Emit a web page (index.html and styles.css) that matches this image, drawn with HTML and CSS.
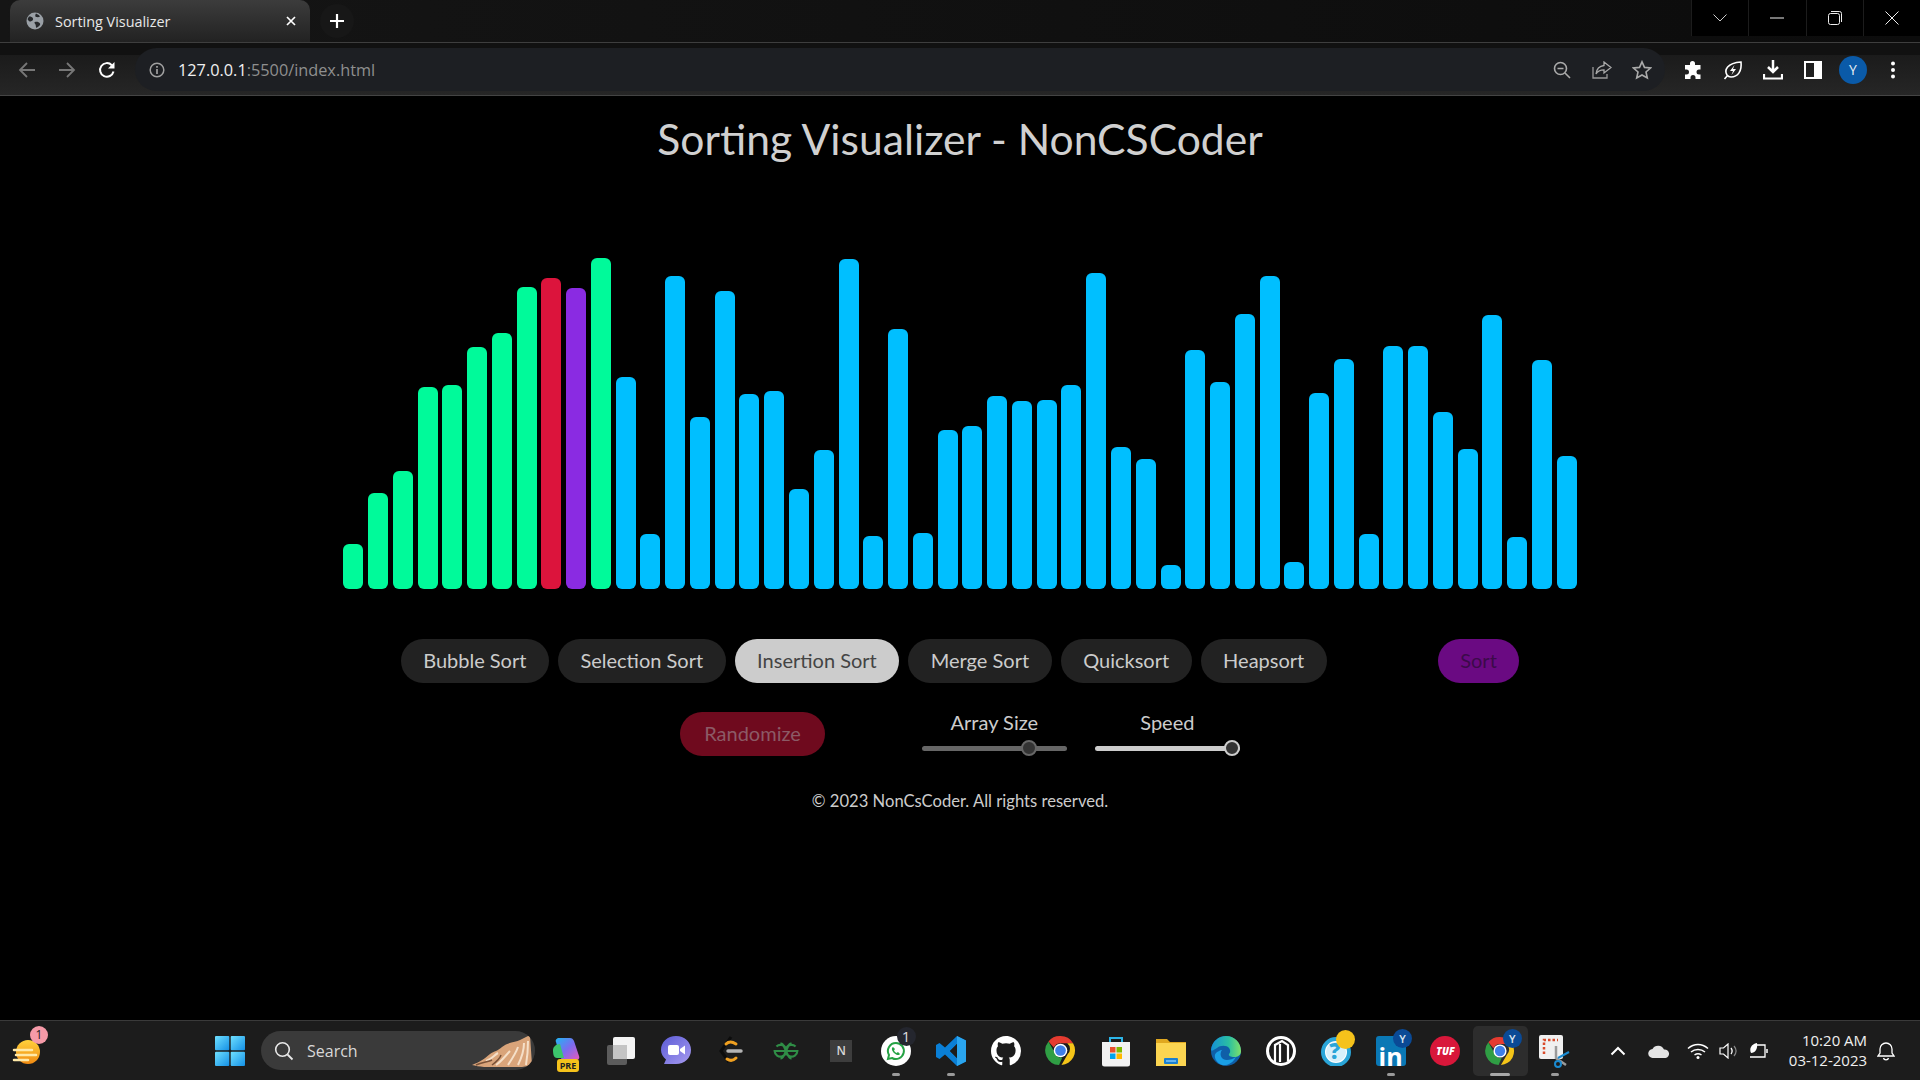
FILE: index.html
```html
<!DOCTYPE html>
<html lang="en">
<head>
<meta charset="utf-8">
<title>Sorting Visualizer</title>
<link rel="stylesheet" href="styles.css">
</head>
<body>
<svg class="defs" width="0" height="0" aria-hidden="true">
  <defs>
    <symbol id="chrome-logo" viewBox="0 0 32 32">
      <path d="M16 1a15 15 0 0 1 13 7.5H16a7.5 7.5 0 0 0-6.9 4.5L3.6 6.6A15 15 0 0 1 16 1z" fill="#e53b30"/>
      <path d="M29 8.500A15 15 0 0 1 17 31l6.500-11.300A7.500 7.500 0 0 0 23 8.500z" fill="#f5c518"/>
      <path d="M3.600 6.600L9.900 18a7.500 7.500 0 0 0 8 5.300L14.500 31A15 15 0 0 1 3.600 6.600z" fill="#2f9e44"/>
      <circle cx="16" cy="16" r="7" fill="#fff"/>
      <circle cx="16" cy="16" r="5.500" fill="#3f7fe8"/>
    </symbol>
  </defs>
</svg>

<header class="browser">
  <div class="tabstrip">
    <div class="tab">
      <svg class="favicon" viewBox="0 0 18 18"><circle cx="9" cy="9" r="8.500" fill="#9aa0a6"/><path d="M3 4.500c2 0 3.500 .5 4 2s-1 2.500-2.500 3S2 8 1.500 7zM10 1.500c2 1 3 1.500 4 3-1.500 1-3 .5-4 .5s-1-2.500 0-3.500zM9 10c2-.5 4 0 5 1.500S12 15 10.500 16c-1-1.500-.5-2.500-1-3.500S7.500 10.500 9 10z" fill="#26282b"/></svg>
      <span class="tab-title">Sorting Visualizer</span>
      <svg class="tab-close" viewBox="0 0 10 10"><path d="M1 1l8 8M9 1l-8 8" stroke="#fff" stroke-width="1.700" fill="none"/></svg>
    </div>
    <div class="newtab"><svg viewBox="0 0 16 16" width="16" height="16"><path d="M8 1v14M1 8h14" stroke="#fff" stroke-width="2.200" fill="none"/></svg></div>
    <div class="winctrls">
      <div class="winbtn"><svg viewBox="0 0 14 8" width="14" height="8"><path d="M.5.5L7 7 13.500.5" stroke="#ccc" fill="none"/></svg></div>
      <div class="winbtn"><svg viewBox="0 0 14 2" width="14" height="2"><path d="M0 1h14" stroke="#eee" fill="none"/></svg></div>
      <div class="winbtn"><svg viewBox="0 0 14 14" width="14" height="14"><rect x=".5" y="2.500" width="11" height="11" rx="2" stroke="#eee" fill="none"/><path d="M3 .5h8.500a2 2 0 0 1 2 2V11" stroke="#eee" fill="none"/></svg></div>
      <div class="winbtn"><svg viewBox="0 0 14 14" width="14" height="14"><path d="M.5.5l13 13M13.500.5l-13 13" stroke="#eee" fill="none"/></svg></div>
    </div>
  </div>
  <div class="toolbar">
    <div class="tbtn"><svg viewBox="0 0 18 18" width="18" height="18"><path d="M17 9H2M9 2L2 9l7 7" stroke="#777" stroke-width="1.800" fill="none"/></svg></div>
    <div class="tbtn"><svg viewBox="0 0 18 18" width="18" height="18"><path d="M1 9h15M9 2l7 7-7 7" stroke="#777" stroke-width="1.800" fill="none"/></svg></div>
    <div class="tbtn"><svg viewBox="0 0 18 18" width="18" height="18"><path d="M15.500 10.500A6.800 6.800 0 1 1 13.800 4.200" stroke="#fff" stroke-width="2" fill="none"/><path d="M16.500 1v6.500H10z" fill="#fff"/></svg></div>
    <div class="omnibox">
      <svg class="info" viewBox="0 0 16 16" width="16" height="16"><circle cx="8" cy="8" r="6.800" stroke="#a0a0a0" stroke-width="1.500" fill="none"/><path d="M8 7v5M8 4v1.800" stroke="#a0a0a0" stroke-width="1.700"/></svg>
      <span class="url"><span class="url-host">127.0.0.1</span>:5500/index.html</span>
      <div class="omni-right">
        <div class="tbtn"><svg viewBox="0 0 18 18" width="18" height="18"><circle cx="7.500" cy="7.500" r="6" stroke="#aaa" stroke-width="1.600" fill="none"/><path d="M4.500 7.500h6M12 12l5 5" stroke="#aaa" stroke-width="1.600"/></svg></div>
        <div class="tbtn"><svg viewBox="0 0 20 18" width="20" height="18"><path d="M1 6v11h14v-4" stroke="#999" stroke-width="1.300" fill="none"/><path d="M12 1l7 5.500-7 5.500V8.800C8 8.800 5.500 10 4 13c.5-4.500 3.500-8 8-8.500z" stroke="#aaa" stroke-width="1.300" fill="none"/></svg></div>
        <div class="tbtn"><svg viewBox="0 0 20 20" width="20" height="20"><path d="M10 1.800l2.500 5.600 6 .6-4.500 4 1.300 6L10 15l-5.300 3 1.300-6-4.500-4 6-.6z" stroke="#aaa" stroke-width="1.600" fill="none"/></svg></div>
      </div>
    </div>
    <div class="toolbar-right">
      <div class="tbtn"><svg viewBox="0 0 20 20" width="20" height="20"><path d="M7 3.500a2.500 2.500 0 0 1 5 0V5h5.500v4.500H16a2.500 2.500 0 0 0 0 5h1.500V19h-5v-1.500a2.500 2.500 0 0 0-5 0V19H2v-4.500h1.500a2.500 2.500 0 0 0 0-5H2V5h5z" fill="#fff"/></svg></div>
      <div class="tbtn"><svg viewBox="0 0 20 20" width="20" height="20"><path d="M4 15C1 10 4 3 18 2c1 9-3 15-10 15-1.500 0-3-.7-4-2zM1.500 19L5 15" stroke="#fff" stroke-width="1.600" fill="none"/><path d="M11.500 5L7 11h3l-1.500 4L13 9h-3z" fill="#fff"/></svg></div>
      <div class="tbtn"><svg viewBox="0 0 20 20" width="20" height="20"><path d="M10 0v11M5 7l5 5 5-5" stroke="#fff" stroke-width="2.500" fill="none"/><path d="M1 14v4.500h18V14" stroke="#fff" stroke-width="2.200" fill="none"/></svg></div>
      <div class="tbtn"><svg viewBox="0 0 18 18" width="18" height="18"><rect x="1" y="1" width="16" height="16" fill="none" stroke="#fff" stroke-width="2"/><rect x="10" y="1" width="7" height="16" fill="#fff"/></svg></div>
      <div class="tbtn"><span class="avatar">Y</span></div>
      <div class="tbtn"><svg viewBox="0 0 6 18" width="6" height="18"><circle cx="3" cy="2.500" r="2" fill="#fff"/><circle cx="3" cy="9" r="2" fill="#fff"/><circle cx="3" cy="15.500" r="2" fill="#fff"/></svg></div>
    </div>
  </div>
</header>

<main class="page">
  <h1 class="title">Sorting Visualizer - NonCSCoder</h1>
  <div class="bars">
    <div class="bar sorted" style="height:45px"></div>
    <div class="bar sorted" style="height:96px"></div>
    <div class="bar sorted" style="height:118px"></div>
    <div class="bar sorted" style="height:202px"></div>
    <div class="bar sorted" style="height:204px"></div>
    <div class="bar sorted" style="height:242px"></div>
    <div class="bar sorted" style="height:256px"></div>
    <div class="bar sorted" style="height:302px"></div>
    <div class="bar current" style="height:311px"></div>
    <div class="bar compare" style="height:301px"></div>
    <div class="bar sorted" style="height:331px"></div>
    <div class="bar" style="height:212px"></div>
    <div class="bar" style="height:55px"></div>
    <div class="bar" style="height:313px"></div>
    <div class="bar" style="height:172px"></div>
    <div class="bar" style="height:298px"></div>
    <div class="bar" style="height:195px"></div>
    <div class="bar" style="height:198px"></div>
    <div class="bar" style="height:100px"></div>
    <div class="bar" style="height:139px"></div>
    <div class="bar" style="height:330px"></div>
    <div class="bar" style="height:53px"></div>
    <div class="bar" style="height:260px"></div>
    <div class="bar" style="height:56px"></div>
    <div class="bar" style="height:159px"></div>
    <div class="bar" style="height:163px"></div>
    <div class="bar" style="height:193px"></div>
    <div class="bar" style="height:188px"></div>
    <div class="bar" style="height:189px"></div>
    <div class="bar" style="height:204px"></div>
    <div class="bar" style="height:316px"></div>
    <div class="bar" style="height:142px"></div>
    <div class="bar" style="height:130px"></div>
    <div class="bar" style="height:24px"></div>
    <div class="bar" style="height:239px"></div>
    <div class="bar" style="height:207px"></div>
    <div class="bar" style="height:275px"></div>
    <div class="bar" style="height:313px"></div>
    <div class="bar" style="height:27px"></div>
    <div class="bar" style="height:196px"></div>
    <div class="bar" style="height:230px"></div>
    <div class="bar" style="height:55px"></div>
    <div class="bar" style="height:243px"></div>
    <div class="bar" style="height:243px"></div>
    <div class="bar" style="height:177px"></div>
    <div class="bar" style="height:140px"></div>
    <div class="bar" style="height:274px"></div>
    <div class="bar" style="height:52px"></div>
    <div class="bar" style="height:229px"></div>
    <div class="bar" style="height:133px"></div>
  </div>
  <div class="algos">
    <button class="pill">Bubble Sort</button>
    <button class="pill">Selection Sort</button>
    <button class="pill active">Insertion Sort</button>
    <button class="pill">Merge Sort</button>
    <button class="pill">Quicksort</button>
    <button class="pill">Heapsort</button>
    <button class="pill sort">Sort</button>
  </div>
  <div class="controls">
    <button class="pill randomize">Randomize</button>
    <div class="sliders">
      <label class="slider-group"><span class="slider-label">Array Size</span><input class="range range-dim" type="range" min="0" max="100" value="77"></label>
      <label class="slider-group"><span class="slider-label">Speed</span><input class="range" type="range" min="0" max="100" value="100"></label>
    </div>
  </div>
  <p class="copyright">© 2023 NonCsCoder. All rights reserved.</p>
</main>

<footer class="taskbar">
  <div class="tb-weather">
    <svg viewBox="0 0 32 32" width="32" height="32"><defs><linearGradient id="sun" x1="0" y1="0" x2="0" y2="1"><stop offset="0" stop-color="#ffd23c"/><stop offset="1" stop-color="#f08a12"/></linearGradient></defs><circle cx="17" cy="17" r="12" fill="url(#sun)"/><path d="M3 15h18M5 20h20M3 25h14" stroke="#ffe9a8" stroke-width="2.500" stroke-linecap="round"/></svg>
    <span class="weather-badge">1</span>
  </div>
  <div class="tb-start"><svg viewBox="0 0 30 30" width="30" height="30"><defs><linearGradient id="win" x1="0" y1="0" x2="1" y2="1"><stop offset="0" stop-color="#6fe0ff"/><stop offset="1" stop-color="#1490e6"/></linearGradient></defs><rect x="0" y="0" width="14.300" height="14.300" rx="1" fill="url(#win)"/><rect x="15.700" y="0" width="14.300" height="14.300" rx="1" fill="url(#win)"/><rect x="0" y="15.700" width="14.300" height="14.300" rx="1" fill="url(#win)"/><rect x="15.700" y="15.700" width="14.300" height="14.300" rx="1" fill="url(#win)"/></svg></div>
  <div class="tb-search">
    <svg viewBox="0 0 20 20" width="20" height="20"><circle cx="8.500" cy="8.500" r="6.800" stroke="#e8e8e8" stroke-width="1.600" fill="none"/><path d="M13.500 13.500l5 5" stroke="#e8e8e8" stroke-width="1.800"/></svg>
    <span class="search-text">Search</span>
    <svg class="search-art" viewBox="0 0 60 32" width="60" height="32"><path d="M0 30C8 27 12 24 18 19c4-3 8-3 12-7 6-5 14-5 18-7l10-5 2 30c-12 4-44 4-60 0z" fill="#d9a47a"/><path d="M14 26c6-2 8-6 12-8M24 30c6-4 10-10 14-14M36 30c4-6 8-12 10-18M46 30c3-6 6-14 6-22M54 30c1-6 2-14 2-24" stroke="#f5dfc8" stroke-width="2" fill="none"/><path d="M4 30c6-3 12-3 16-5M20 30c4-3 8-6 9-10" stroke="#7a5238" stroke-width="1.500" fill="none"/></svg>
  </div>
  <div class="tb-apps">
    <div class="app"><svg viewBox="0 0 30 30" width="30" height="30"><defs><linearGradient id="cop" x1="0" y1="0" x2="1" y2="1"><stop offset="0" stop-color="#1fb6f2"/><stop offset=".5" stop-color="#7b6cf0"/><stop offset="1" stop-color="#e858b8"/></linearGradient></defs><path d="M8 2h11c2 0 3 1 4 3l5 15c1 3-1 4-3 4H14c-3 0-4-1-5-4L5 6C4 4 6 2 8 2z" fill="url(#cop)"/><path d="M2 14c0-3 3-6 7-6l4 14H6c-3 0-4-3-4-8z" fill="#3cc46c"/></svg><span class="pre-tag">PRE</span></div>
    <div class="app"><svg viewBox="0 0 30 30" width="30" height="30"><rect x="1" y="9" width="20" height="20" rx="2" fill="#5c5c5c"/><rect x="7" y="1" width="22" height="22" rx="2" fill="#f4f4f4"/><rect x="7" y="9" width="14" height="14" fill="#c4c4c4"/></svg></div>
    <div class="app"><svg viewBox="0 0 30 30" width="30" height="30"><defs><linearGradient id="meet" x1="0" y1="0" x2="1" y2="1"><stop offset="0" stop-color="#5b5bd6"/><stop offset="1" stop-color="#a79bf0"/></linearGradient></defs><path d="M15 0c8.500 0 15 6 15 14s-6.500 14-15 14H3l2-4.500C2 21 0 18 0 14 0 6 6.500 0 15 0z" fill="url(#meet)"/><rect x="7" y="9" width="11" height="10" rx="2" fill="#fff"/><path d="M19 13l5-3.500v9L19 15z" fill="#fff"/></svg></div>
    <div class="app"><svg viewBox="0 0 30 30" width="30" height="30"><path d="M15 1L5 15l8 11" stroke="#0c0c0c" stroke-width="3" fill="none"/><path d="M10 8c3-3 7-2 10 0M11 23c3 2 6 2 9-1" stroke="#f0a020" stroke-width="3" fill="none" stroke-linecap="round"/><path d="M12 15h13" stroke="#b4b4b4" stroke-width="3.500" stroke-linecap="round"/></svg></div>
    <div class="app"><svg viewBox="0 0 30 22" width="28" height="20"><path d="M15 11h12.500a6.500 6.500 0 1 1-2-5M15 11H2.500a6.500 6.500 0 1 0 2-5M9 3c3-1 4 4 6 8s3 9 6 8M21 3c-3-1-4 4-6 8s-3 9-6 8" stroke="#2f8d46" stroke-width="2.400" fill="none"/></svg></div>
    <div class="app"><span class="notion">N</span></div>
    <div class="app"><svg viewBox="0 0 30 30" width="30" height="30"><circle cx="15" cy="15" r="15" fill="#fff"/><path d="M15 7a8 8 0 0 0-7 12l-1 4 4-1a8 8 0 1 0 4-15z" stroke="#25a244" stroke-width="2" fill="none"/><path d="M12 11c-2 1-1 4 1 6s5 3 6 1l-2-2-1.500 1c-1-.5-2-1.500-2.500-2.500l1-1.500z" fill="#25a244"/></svg><span class="msg-badge">1</span><span class="pip"></span></div>
    <div class="app"><svg viewBox="0 0 30 30" width="30" height="30"><path d="M21 0l9 4.500v21L21 30 9 18.500 3.500 23 0 21V9l3.500-2L9 11.500zM21 8l-7 7 7 7z" fill="#0a7fd6"/><path d="M21 0l9 4.500v21L21 30z" fill="#2aa5ef"/><path d="M21 8l-7 7 7 7z" fill="#1c1c1c"/></svg><span class="pip"></span></div>
    <div class="app"><svg viewBox="0 0 16 16" width="30" height="30"><path fill="#fff" d="M8 0C3.580 0 0 3.580 0 8c0 3.540 2.290 6.530 5.470 7.590.4.070.55-.17.55-.38 0-.19-.01-.82-.01-1.490-2.010.37-2.530-.49-2.690-.94-.09-.23-.48-.94-.82-1.130-.28-.15-.68-.52-.01-.53.630-.01 1.080.58 1.230.82.720 1.210 1.870.87 2.330.66.070-.52.28-.87.510-1.070-1.780-.2-3.640-.89-3.640-3.950 0-.87.310-1.590.820-2.150-.08-.2-.36-1.020.08-2.120 0 0 .67-.21 2.200.82.640-.18 1.320-.27 2-.27s1.360.09 2 .27c1.530-1.040 2.200-.82 2.200-.82.440 1.100.16 1.920.08 2.120.51.560.82 1.270.82 2.150 0 3.070-1.870 3.750-3.650 3.950.29.250.54.730.54 1.480 0 1.070-.01 1.930-.01 2.200 0 .21.150.46.550.38A8.010 8.010 0 0 0 16 8c0-4.420-3.580-8-8-8z"/></svg></div>
    <div class="app"><svg width="31" height="31"><use href="#chrome-logo"/></svg></div>
    <div class="app"><svg viewBox="0 0 30 32" width="30" height="32"><path d="M9 8V3h12v5" stroke="#2cb5e8" stroke-width="2" fill="none"/><path d="M1 7h28v22a2.500 2.500 0 0 1-2.500 2.500h-23A2.500 2.500 0 0 1 1 29z" fill="#f2f2f2"/><rect x="9" y="12" width="5.500" height="5.500" fill="#e9502f"/><rect x="15.500" y="12" width="5.500" height="5.500" fill="#7fba00"/><rect x="9" y="18.500" width="5.500" height="5.500" fill="#00a4ef"/><rect x="15.500" y="18.500" width="5.500" height="5.500" fill="#ffb900"/></svg></div>
    <div class="app"><svg viewBox="0 0 30 30" width="30" height="30"><path d="M0 3h11l3 3h16v24H0z" fill="#e0a820"/><rect x="0" y="7" width="30" height="23" fill="#fbd551"/><rect x="8" y="22" width="14" height="6" rx="1" fill="#1a7fd0"/><rect x="10" y="24" width="10" height="2" fill="#64b4ee"/></svg></div>
    <div class="app"><svg viewBox="0 0 30 30" width="30" height="30"><defs><linearGradient id="edge" x1="0" y1="0" x2="1" y2="0"><stop offset="0" stop-color="#1490d8"/><stop offset=".6" stop-color="#2bc0a0"/><stop offset="1" stop-color="#7fe06a"/></linearGradient></defs><circle cx="15" cy="15" r="15" fill="#0f5fa8"/><path d="M0 14C1 5 8 0 15 0c9 0 15 7 15 15 0 4-3 6-7 6-3 0-6-1-5-3 1-1 2-3 0-6s-9-3-12 0c-2 1-5 4-6 2z" fill="url(#edge)"/><path d="M11 14c-3 4-1 10 5 10 3 0 6-1 9-3-3 6-9 9-14 8-6-2-9-9-6-12 1-1 4-3 6-3z" fill="#1a9fe6"/></svg></div>
    <div class="app"><svg viewBox="0 0 30 30" width="30" height="30"><circle cx="15" cy="15" r="13.500" fill="#1c1c1c" stroke="#fff" stroke-width="3"/><path d="M9 26V9l7-4 6 4v16M14 26V8" stroke="#fff" stroke-width="2.200" fill="none"/></svg></div>
    <div class="app"><svg viewBox="0 0 30 30" width="30" height="30"><circle cx="15" cy="16" r="13" fill="#fff" stroke="#2aa5d8" stroke-width="4"/><circle cx="15" cy="16" r="10" fill="#d8f0fa"/></svg><span class="help-q">?</span><span class="help-dot"></span></div>
    <div class="app"><span class="linkedin"><span class="linkedin-text">in</span></span><span class="y-badge">Y</span><span class="pip"></span></div>
    <div class="app"><span class="tuf">TUF</span></div>
    <div class="app app-active"><svg width="30" height="30"><use href="#chrome-logo"/></svg><span class="y-badge">Y</span><span class="pip pip-wide"></span></div>
    <div class="app"><svg viewBox="0 0 34 34" width="34" height="34"><rect x="1" y="1" width="24" height="24" rx="2" fill="#f0f0f0"/><path d="M6 20V6h14" stroke="#d94b2b" stroke-width="2.500" stroke-dasharray="2.500 2" fill="none"/><path d="M18 12v12l10 7" stroke="#9a9a9a" stroke-width="2.500" fill="none"/><path d="M20 24l11-6" stroke="#1a8ad0" stroke-width="2"/><circle cx="20" cy="30" r="3" fill="none" stroke="#1a8ad0" stroke-width="2"/></svg><span class="pip"></span></div>
  </div>
  <div class="tray">
    <svg class="tray-caret" viewBox="0 0 16 10" width="16" height="10"><path d="M1.500 8.500L8 2l6.500 6.500" stroke="#fff" stroke-width="2" fill="none"/></svg>
    <svg class="tray-cloud" viewBox="0 0 22 14" width="22" height="14"><path d="M5 14a4.500 4.500 0 0 1-.5-9A6.500 6.500 0 0 1 16 5.500a4.300 4.300 0 0 1 1.500 8.500z" fill="#e4e4e4"/></svg>
    <svg class="tray-wifi" viewBox="0 0 22 16" width="22" height="16"><path d="M1 5.500c6-5.300 14-5.300 20 0M4 9c4-3.500 10-3.500 14 0M7.500 12c2-1.500 5-1.500 7 0" stroke="#fff" stroke-width="1.500" fill="none"/><circle cx="11" cy="14.500" r="1.500" fill="#fff"/></svg>
    <svg class="tray-vol" viewBox="0 0 20 16" width="20" height="16"><path d="M1 5h3.500L9 1v14l-4.500-4H1z" stroke="#fff" stroke-width="1.200" fill="none"/><path d="M12 5c1.500 2 1.500 4 0 6" stroke="#fff" stroke-width="1.300" fill="none"/><path d="M15 3c2.500 3 2.500 7 0 10" stroke="#888" stroke-width="1.200" fill="none"/></svg>
    <svg class="tray-batt" viewBox="0 0 22 18" width="22" height="18"><path d="M9 3h8v12H2" stroke="#fff" stroke-width="1.300" fill="none"/><path d="M19 7v4" stroke="#fff" stroke-width="1.500"/><path d="M9 1C3 2 1 7 3 11c4 0 7-4 6-10z" fill="#fff"/></svg>
    <div class="clock"><span>10:20 AM</span><span>03-12-2023</span></div>
    <svg class="tray-bell" viewBox="0 0 18 20" width="18" height="20"><path d="M1 15h16l-2-3V8A6 6 0 0 0 3 8v4zM6.500 17c.5 2.500 4.500 2.500 5 0" stroke="#fff" stroke-width="1.300" fill="none"/></svg>
  </div>
</footer>
</body>
</html>
```

FILE: styles.css
```css
* { box-sizing: border-box; margin: 0; padding: 0; }
html, body { width: 100%; height: 100%; }
body {
  display: flex;
  flex-direction: column;
  height: 1080px;
  overflow: hidden;
  background: #000;
  color: #ccc;
  font-family: "Lato", "Open Sans", sans-serif;
}
.defs { display: block; height: 0; }

/* Browser chrome */
.browser { flex: 0 0 96px; display: flex; flex-direction: column; font-family: "Open Sans", sans-serif; }
.tabstrip {
  flex: 0 0 43px;
  display: flex;
  align-items: flex-start;
  padding-left: 10px;
  background: linear-gradient(90deg, #151515, #0c0c0c);
  border-bottom: 1px solid #3e3e3e;
}
.tab {
  width: 300px;
  height: 42px;
  display: flex;
  align-items: center;
  padding: 0 14px 0 16px;
  border-radius: 10px 10px 0 0;
  background: linear-gradient(#3c3c3c, #222);
}
.favicon { width: 18px; height: 18px; }
.tab-title { flex: 1; margin-left: 11px; color: #e8e8e8; font-size: 14.400px; }
.tab-close { width: 10px; height: 10px; }
.newtab {
  width: 34px;
  height: 34px;
  margin: 4px 0 0 10px;
  border-radius: 50%;
  background: #171717;
  display: flex;
  align-items: center;
  justify-content: center;
}
.winctrls { margin-left: auto; display: flex; height: 36px; background: #000; }
.winbtn {
  width: 57.250px;
  display: flex;
  align-items: center;
  justify-content: center;
  border-left: 1px solid #1c1c1c;
}
.toolbar {
  flex: 1;
  display: flex;
  align-items: center;
  padding: 5px 7px 4px 7px;
  background: linear-gradient(#111 0, #111 12px, #1b1b1b 12px, #262626 100%);
  border-bottom: 1px solid #444;
}
.tbtn { width: 40px; height: 40px; display: flex; align-items: center; justify-content: center; }
.omnibox {
  flex: 1;
  height: 43px;
  margin-left: 8px;
  margin-right: 8px;
  display: flex;
  align-items: center;
  padding-left: 14px;
  padding-right: 3px;
  border-radius: 22px;
  background: #1d1f23;
}
.info { margin-right: 13px; }
.url { color: #8f8f8f; font-size: 16.300px; }
.url-host { color: #f0f0f0; }
.omni-right { margin-left: auto; display: flex; }
.toolbar-right { display: flex; }
.avatar {
  width: 28px;
  height: 28px;
  border-radius: 50%;
  background: #0a5aa8;
  color: #e8eef5;
  font-size: 14px;
  display: flex;
  align-items: center;
  justify-content: center;
}

/* Page */
.page { flex: 1; display: flex; flex-direction: column; align-items: center; }
.title {
  margin-top: 13px;
  font-size: 42.600px;
  line-height: 60px;
  font-weight: 400;
  color: #d0d0d0;
}
.bars {
  height: 331px;
  margin-top: 89px;
  display: flex;
  align-items: flex-end;
  gap: 4.770px;
}
.bar { width: 20px; border-radius: 6px; background: #00bfff; }
.bar.sorted { background: #00fa9a; }
.bar.current { background: #dc143c; }
.bar.compare { background: #8a2be2; }
.algos { margin-top: 50px; display: flex; gap: 9px; }
.pill {
  height: 44px;
  padding: 0 22.500px 2px;
  border: 0;
  border-radius: 22px;
  background: #222;
  color: #ccc;
  font: 400 20px "Lato", sans-serif;
}
.pill.active { background: #ccc; color: #444; }
.pill.sort { margin-left: 102px; background: #6a0a82; color: #3c0a4a; }
.controls { margin-top: 29px; display: flex; align-items: flex-start; gap: 97px; }
.pill.randomize { padding: 0 24px 3px; background: #6f0a1e; color: #8c5a66; }
.sliders { display: flex; gap: 28px; }
.slider-group { width: 145px; display: flex; flex-direction: column; align-items: center; gap: 8px; }
.slider-label { font-size: 20px; line-height: 20px; color: #ccc; }
.range {
  -webkit-appearance: none;
  appearance: none;
  width: 145px;
  height: 16px;
  margin: 0;
  background: transparent;
}
.range::-webkit-slider-runnable-track { height: 5px; border-radius: 3px; background: #ccc; }
.range::-webkit-slider-thumb {
  -webkit-appearance: none;
  width: 16px;
  height: 16px;
  margin-top: -5.500px;
  border-radius: 50%;
  background: #333;
  border: 2px solid #ccc;
}
.range-dim::-webkit-slider-runnable-track { background: #666; }
.range-dim::-webkit-slider-thumb { border-color: #666; }
.copyright { margin-top: 33px; font-size: 16.600px; line-height: 24px; color: #ccc; }

/* Taskbar */
.taskbar {
  flex: 0 0 60px;
  display: flex;
  align-items: center;
  background: #1c1c1c;
  border-top: 1px solid #3a3a3a;
  font-family: "Open Sans", sans-serif;
  color: #fff;
}
.tb-weather { position: relative; width: 32px; height: 32px; margin-left: 11px; }
.weather-badge {
  position: absolute;
  top: -9px;
  right: -5px;
  width: 18px;
  height: 18px;
  border-radius: 50%;
  background: #f59aa8;
  color: #222;
  font-size: 12px;
  text-align: center;
  line-height: 18px;
}
.tb-start { width: 30px; height: 30px; margin-left: 172px; }
.tb-search {
  width: 274px;
  height: 39px;
  margin-left: 16px;
  padding-left: 13px;
  display: flex;
  align-items: center;
  border-radius: 20px;
  background: #3a3a3a;
  overflow: hidden;
}
.search-text { margin-left: 13px; color: #d8d8d8; font-size: 16px; }
.search-art { margin-left: auto; margin-right: 3px; }
.tb-apps { margin-left: 4px; display: flex; }
.app { position: relative; width: 54.950px; height: 50px; display: flex; align-items: center; justify-content: center; }
.app-active { background: #2d2d2d; border-radius: 5px; }
.pre-tag {
  position: absolute;
  bottom: 4px;
  left: 18px;
  width: 22px;
  border-radius: 3px;
  background: #f5c21b;
  color: #222;
  font-size: 9px;
  font-weight: 700;
  line-height: 13px;
  text-align: center;
}
.notion {
  width: 22px;
  height: 22px;
  background: #3d3d3d;
  color: #d8d8d8;
  font-size: 12px;
  font-weight: 600;
  display: flex;
  align-items: center;
  justify-content: center;
}
.msg-badge {
  position: absolute;
  top: 1px;
  right: 8px;
  width: 19px;
  height: 19px;
  border-radius: 50%;
  background: #24262e;
  color: #ddd;
  font-size: 15px;
  line-height: 19px;
  text-align: center;
}
.pip {
  position: absolute;
  bottom: 0;
  left: 50%;
  width: 8px;
  height: 3px;
  margin-left: -4px;
  border-radius: 2px;
  background: #9a9a9a;
}
.pip-wide { width: 20px; margin-left: -10px; background: #a8a8a8; }
.help-q {
  position: absolute;
  left: 21px;
  top: 9px;
  color: #2aa5d8;
  font-size: 22px;
  font-weight: 800;
  line-height: 30px;
}
.help-dot {
  position: absolute;
  top: 4px;
  right: 8px;
  width: 19px;
  height: 19px;
  border-radius: 50%;
  background: #f5c21b;
}
.linkedin {
  width: 30px;
  height: 30px;
  padding: 0 0 2px 3px;
  border-radius: 3px;
  background: #0a78b5;
  display: flex;
  align-items: flex-end;
}
.linkedin-text {
  color: #fff;
  font-size: 25px;
  font-weight: 700;
  line-height: 16px;
}
.y-badge {
  position: absolute;
  top: 3px;
  right: 6px;
  width: 19px;
  height: 19px;
  border-radius: 50%;
  background: #0a4a96;
  color: #d8e4f0;
  font-size: 11px;
  font-weight: 600;
  line-height: 19px;
  text-align: center;
}
.tuf {
  width: 30px;
  height: 30px;
  border-radius: 50%;
  background: #d8173a;
  color: #fff;
  font-size: 10px;
  font-weight: 800;
  font-style: italic;
  line-height: 30px;
  text-align: center;
}
.tray { flex: 1; display: flex; align-items: center; padding-left: 27px; }
.tray-cloud { margin-left: 22px; }
.tray-wifi { margin-left: 17px; }
.tray-vol { margin-left: 10px; }
.tray-batt { margin-left: 9px; }
.clock {
  margin-left: 19px;
  padding-bottom: 2px;
  display: flex;
  flex-direction: column;
  align-items: flex-end;
  color: #f0f0f0;
  font-size: 15px;
  line-height: 20px;
}
.tray-bell { margin-left: 10px; }
```
